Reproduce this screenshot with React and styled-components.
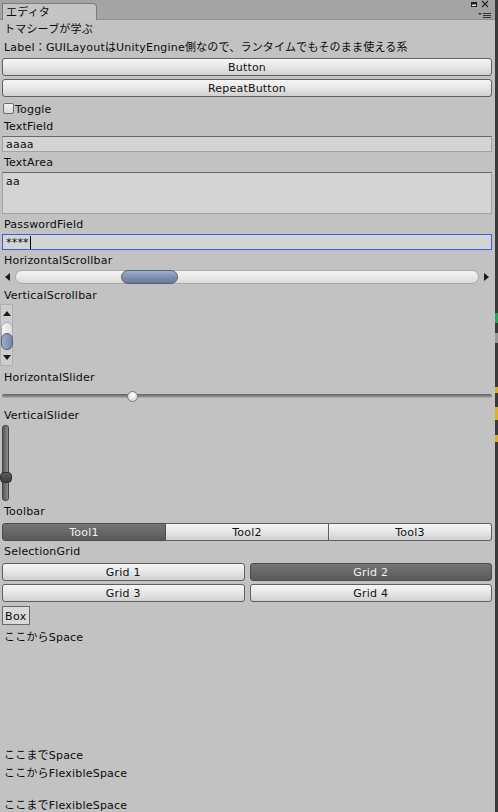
import React from "react";
import styled, { createGlobalStyle, css } from "styled-components";

const Global = createGlobalStyle`
  html, body { margin: 0; padding: 0; background: #3a3a3a; }
  body {
    font-family: "DejaVu Sans", "Noto Sans CJK JP", sans-serif;
    font-size: 11px;
    letter-spacing: 0.2px;
    color: #0c0c0c;
  }
`;

const Screen = styled.div`
  display: flex;
  width: 498px;
  height: 812px;
  overflow: hidden;
`;

const Window = styled.div`
  width: 495px;
  height: 812px;
  background: #c2c2c2;
  display: flex;
  flex-direction: column;
  overflow: hidden;
`;

const Desktop = styled.div`
  flex: 1;
  background: linear-gradient(
    to bottom,
    #3a3a3a 0 313px,
    #2fa05a 313px 323px,
    #3a3a3a 323px 333px,
    #9a9a9a 333px 343px,
    #3a3a3a 343px 387px,
    #d8b130 387px 393px,
    #3a3a3a 393px 407px,
    #d8b130 407px 420px,
    #3a3a3a 420px 435px,
    #d8b130 435px 442px,
    #3a3a3a 442px
  );
`;

const TabStrip = styled.div`
  height: 20px;
  flex: none;
  box-sizing: border-box;
  background: #a4a4a4;
  border-bottom: 1px solid #8e8e8e;
  display: flex;
  align-items: flex-end;
  padding-left: 2px;
`;

const Tab = styled.div`
  width: 95px;
  height: 17px;
  box-sizing: border-box;
  margin-bottom: -1px;
  background: #c4c4c4;
  border: 1px solid #7c7c7c;
  border-bottom: none;
  border-top-right-radius: 4px;
  padding-left: 3px;
  line-height: 17px;
  font-size: 11px;
`;

const WindowIcons = styled.div`
  margin-left: auto;
  align-self: stretch;
  width: 26px;
  display: flex;
  flex-direction: column;
`;

const Content = styled.div`
  display: flex;
  flex-direction: column;
  padding: 0 3px 0 2px;
`;

const Label = styled.div`
  height: 18px;
  line-height: 20px;
  padding-left: 2px;
  white-space: nowrap;
  margin-top: ${(p) => p.$mt || 0}px;
`;

const buttonFace = css`
  box-sizing: border-box;
  height: 18px;
  border: 1px solid #606060;
  border-radius: 3px;
  background: linear-gradient(#f6f6f6, #e4e4e4 55%, #d0d0d0);
  display: flex;
  align-items: center;
  justify-content: center;
  padding-top: 1px;
  color: #111;
  white-space: nowrap;
`;

const selectedFace = css`
  background: linear-gradient(#747474, #646464 60%, #5a5a5a);
  border-color: #4b4b4b;
  color: #f0f0f0;
`;

const Button = styled.div`
  ${buttonFace}
  margin-top: ${(p) => p.$mt || 0}px;
  ${(p) => p.$on && selectedFace}
`;

const ToggleRow = styled.div`
  height: 18px;
  margin-top: 2px;
  display: flex;
  align-items: center;
  gap: 1px;
  padding-left: 1px;
`;

const ToggleText = styled.span`
  padding-top: 2px;
`;

const CheckBox = styled.div`
  width: 11px;
  height: 11px;
  box-sizing: border-box;
  border: 1px solid #6e6e6e;
  border-radius: 2px;
  background: linear-gradient(#f2f2f2, #d8d8d8);
`;

const Field = styled.div`
  box-sizing: border-box;
  height: ${(p) => p.$h || 16}px;
  margin-top: 1px;
  background: #d4d4d4;
  border: 1px solid #a2a2a2;
  border-top-color: #686868;
  padding: ${(p) => (p.$area ? "2px 3px" : "1px 3px 0")};
  line-height: 14px;
  display: flex;
  align-items: ${(p) => (p.$area ? "flex-start" : "center")};
  ${(p) =>
    p.$focus &&
    css`
      border-color: #3e5fdc;
    `}
`;

const Caret = styled.span`
  display: inline-block;
  width: 1px;
  height: 13px;
  background: #000;
  margin-left: 1px;
`;

const HScroll = styled.div`
  height: 15px;
  margin: 0 -2px 0 -2px;
  display: flex;
  align-items: center;
`;

const ArrowCell = styled.div`
  width: ${(p) => p.$w}px;
  height: ${(p) => p.$h || 15}px;
  display: flex;
  align-items: center;
  justify-content: center;
  flex: none;
`;

const HTrack = styled.div`
  flex: 1;
  height: 14px;
  box-sizing: border-box;
  border: 1px solid #a9a9a9;
  border-radius: 7px;
  background: linear-gradient(#f4f4f4, #e6e6e6 60%, #d9d9d9);
  display: flex;
  align-items: stretch;
  padding-left: 105px;
`;

const Thumb = styled.div`
  box-sizing: border-box;
  width: 57px;
  margin: -1px 0;
  border: 1px solid #56627a;
  border-radius: 7px;
  background: linear-gradient(#9eaecb, #7f91b0 50%, #6a7b99);
`;

const VScroll = styled.div`
  width: 13px;
  height: 62px;
  margin-left: -2px;
  box-sizing: border-box;
  background: #cdcdcd;
  border: 1px solid #b0b0b0;
  display: flex;
  flex-direction: column;
  align-items: center;
`;

const VTrack = styled.div`
  width: 12px;
  height: 28px;
  margin-top: 1px;
  box-sizing: border-box;
  border: 1px solid #aaaaaa;
  border-radius: 6px;
  background: linear-gradient(to right, #f4f4f4, #dedede);
  display: flex;
  flex-direction: column;
  justify-content: flex-end;
`;

const VThumb = styled.div`
  height: 17px;
  margin: 0 -1px -1px;
  box-sizing: border-box;
  border: 1px solid #56627a;
  border-radius: 6px;
  background: linear-gradient(to right, #9eaecb, #7486a6);
`;

const HSlider = styled.div`
  height: 16px;
  margin-top: 2px;
  display: flex;
  align-items: center;
`;

const SliderLine = styled.div`
  flex: 1;
  height: 4px;
  border-radius: 2px;
  background: linear-gradient(#5f5f5f, #8a8a8a 60%, #b5b5b5);
  display: flex;
  align-items: center;
  padding-left: 125px;
`;

const Knob = styled.div`
  width: 11px;
  height: 11px;
  box-sizing: border-box;
  border-radius: 50%;
  border: 1px solid #7a7a7a;
  background: radial-gradient(circle at 50% 35%, #ffffff, #dcdcdc 70%, #c6c6c6);
`;

const VSlider = styled.div`
  width: 12px;
  height: 76px;
  margin: 1px 0 0 -2px;
  display: flex;
  justify-content: center;
`;

const VSliderTrack = styled.div`
  width: 7px;
  box-sizing: border-box;
  margin-right: 1px;
  border: 1px solid #444;
  border-radius: 3px;
  background: linear-gradient(to right, #5a5a5a, #8c8c8c);
  display: flex;
  flex-direction: column;
  align-items: center;
  padding-top: 46px;
`;

const VKnob = styled.div`
  width: 12px;
  height: 11px;
  flex: none;
  box-sizing: border-box;
  border: 1px solid #2e2e2e;
  border-radius: 4px;
  background: linear-gradient(#5c5c5c, #3c3c3c);
`;

const Toolbar = styled.div`
  display: flex;
  height: 18px;
  margin-top: 3px;
`;

const ToolButton = styled.div`
  ${buttonFace}
  flex: 1;
  border-radius: 0;
  & + & { border-left: none; }
  &:first-child { border-radius: 3px 0 0 3px; }
  &:last-child { border-radius: 0 3px 3px 0; }
  ${(p) => p.$on && selectedFace}
`;

const GridSel = styled.div`
  display: grid;
  grid-template-columns: 1fr 1fr;
  column-gap: 5px;
  row-gap: 3px;
  margin-top: 3px;
`;

const BoxEl = styled.div`
  align-self: flex-start;
  box-sizing: border-box;
  height: 19px;
  margin-top: 4px;
  padding: 1px 2px 0;
  border: 1px solid #6a6a6a;
  background: #dadada;
  line-height: 17px;
  letter-spacing: 0.4px;
`;

const Spacer = styled.div`
  height: ${(p) => p.$h}px;
  flex: none;
`;

const Tri = ({ dir }) => {
  const pts = {
    left: "5,0 5,8 0,4",
    right: "0,0 0,8 5,4",
    up: "0,5 8,5 4,0",
    down: "0,0 8,0 4,5",
  }[dir];
  const vert = dir === "up" || dir === "down";
  return (
    <svg width={vert ? 8 : 5} height={vert ? 5 : 8} viewBox={vert ? "0 0 8 5" : "0 0 5 8"}>
      <polygon points={pts} fill="#1a1a1a" />
    </svg>
  );
};

const HeaderIcons = () => (
  <WindowIcons>
    <svg width="26" height="19" viewBox="0 0 26 19">
      <rect x="2.5" y="2.5" width="5" height="4" fill="#e8e8e8" stroke="#222" />
      <rect x="3" y="3" width="4" height="1.5" fill="#222" />
      <path d="M13 1 L19 7 M19 1 L13 7" stroke="#222" strokeWidth="1.1" />
      <polygon points="9,13 13,13 11,15" fill="#333" />
      <path d="M14 13.5 H22 M14 15.5 H22 M14 17.5 H22" stroke="#333" strokeWidth="1" />
    </svg>
  </WindowIcons>
);

export default function App() {
  return (
    <>
      <Global />
      <Screen>
        <Window>
          <TabStrip>
            <Tab>エディタ</Tab>
            <HeaderIcons />
          </TabStrip>
          <Content>
            <Label>トマシーブが学ぶ</Label>
            <Label>Label：GUILayoutはUnityEngine側なので、ランタイムでもそのまま使える系</Label>
            <Button $mt={2}>Button</Button>
            <Button $mt={3}>RepeatButton</Button>
            <ToggleRow>
              <CheckBox />
              <ToggleText>Toggle</ToggleText>
            </ToggleRow>
            <Label>TextField</Label>
            <Field>aaaa</Field>
            <Label $mt={1}>TextArea</Label>
            <Field $area $h={42}>aa</Field>
            <Label $mt={1}>PasswordField</Label>
            <Field $focus>
              ****<Caret />
            </Field>
            <Label $mt={1}>HorizontalScrollbar</Label>
            <HScroll>
              <ArrowCell $w={15}>
                <Tri dir="left" />
              </ArrowCell>
              <HTrack>
                <Thumb />
              </HTrack>
              <ArrowCell $w={15}>
                <Tri dir="right" />
              </ArrowCell>
            </HScroll>
            <Label $mt={2}>VerticalScrollbar</Label>
            <VScroll>
              <ArrowCell $w={11} $h={16}>
                <Tri dir="up" />
              </ArrowCell>
              <VTrack>
                <VThumb />
              </VTrack>
              <ArrowCell $w={11} $h={14}>
                <Tri dir="down" />
              </ArrowCell>
            </VScroll>
            <Label $mt={2}>HorizontalSlider</Label>
            <HSlider>
              <SliderLine>
                <Knob />
              </SliderLine>
            </HSlider>
            <Label $mt={2}>VerticalSlider</Label>
            <VSlider>
              <VSliderTrack>
                <VKnob />
              </VSliderTrack>
            </VSlider>
            <Label $mt={1}>Toolbar</Label>
            <Toolbar>
              <ToolButton $on>Tool1</ToolButton>
              <ToolButton>Tool2</ToolButton>
              <ToolButton>Tool3</ToolButton>
            </Toolbar>
            <Label $mt={1}>SelectionGrid</Label>
            <GridSel>
              <Button>Grid 1</Button>
              <Button $on>Grid 2</Button>
              <Button>Grid 3</Button>
              <Button>Grid 4</Button>
            </GridSel>
            <BoxEl>Box</BoxEl>
            <Label $mt={3}>ここからSpace</Label>
            <Spacer $h={100} />
            <Label>ここまでSpace</Label>
            <Label>ここからFlexibleSpace</Label>
            <Spacer $h={14} />
            <Label>ここまでFlexibleSpace</Label>
          </Content>
        </Window>
        <Desktop />
      </Screen>
    </>
  );
}
